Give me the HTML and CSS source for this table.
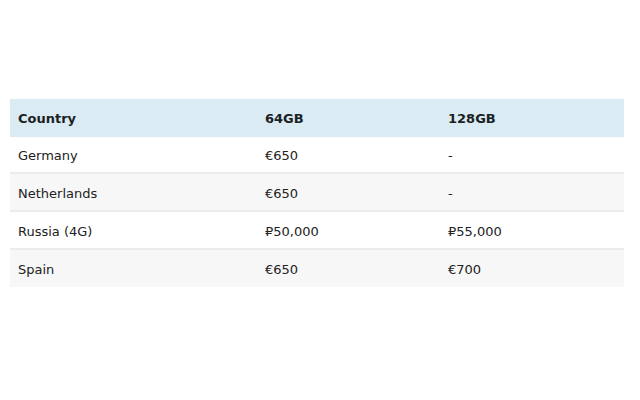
FILE: index.html
```html
<!DOCTYPE html>
<html>
<head>
<meta charset="utf-8">
<link rel="stylesheet" href="styles.css">
</head>
<body>
<div class="page">
<table class="prices">
<colgroup><col class="c1"><col class="c2"><col class="c3"></colgroup>
<thead>
<tr><th>Country</th><th>64GB</th><th>128GB</th></tr>
</thead>
<tbody>
<tr><td>Germany</td><td>€650</td><td>-</td></tr>
<tr><td>Netherlands</td><td>€650</td><td>-</td></tr>
<tr><td>Russia (4G)</td><td>₽50,000</td><td>₽55,000</td></tr>
<tr><td>Spain</td><td>€650</td><td>€700</td></tr>
</tbody>
</table>
</div>
</body>
</html>
```
FILE: styles.css
```css
html, body { margin: 0; padding: 0; background: #fff; }
.page { padding: 99px 16px 0 10px; }
.prices {
  width: 614px;
  border-collapse: collapse;
  table-layout: fixed;
  font-family: "DejaVu Sans", Verdana, sans-serif;
  font-size: 13px;
  color: #222;
}
.c1 { width: 247px; }
.c2 { width: 183px; }
.c3 { width: 184px; }
.prices th {
  background: #dbebf4;
  text-align: left;
  font-weight: bold;
  height: 38px;
  padding: 0 8px;
  box-sizing: border-box;
  color: #1a1f24;
}
.prices td {
  height: 38px;
  padding: 2px 8px 0;
  box-sizing: border-box;
  border-top: 2px solid #ececec;
}
.prices tbody tr:first-child td { border-top: none; height: 36px; }
.prices tbody tr:nth-child(even) td { background: #f7f7f7; }
```
